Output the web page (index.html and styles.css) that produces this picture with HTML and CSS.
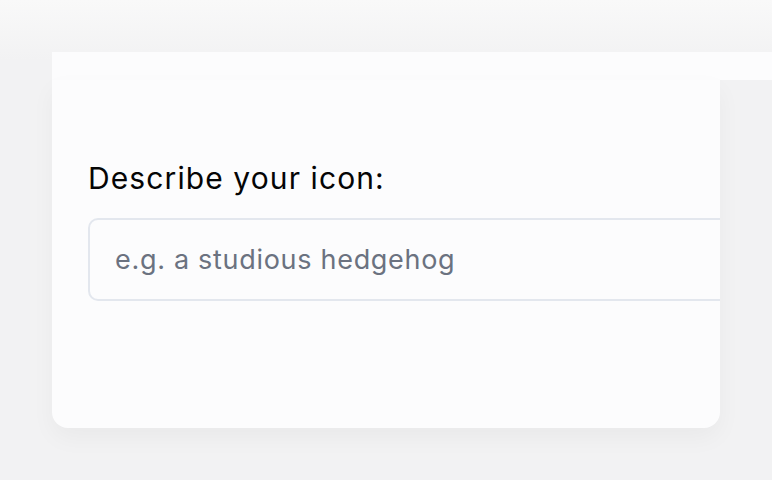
FILE: index.html
```html
<!DOCTYPE html>
<html lang="en">
<head>
  <meta charset="UTF-8" />
  <title>Describe your icon</title>
  <link rel="stylesheet" href="styles.css">
</head>
<body>
  <div class="sheet">
    <div class="sheet-top"></div>
    <div class="card">
      <form class="icon-form">
        <label for="prompt">Describe your icon:</label>
        <input type="text" id="prompt" placeholder="e.g. a studious hedgehog" />
      </form>
    </div>
  </div>
</body>
</html>
```

FILE: styles.css
```css
* {
  box-sizing: border-box;
}

body {
  margin: 0;
  font-family: 'Inter', sans-serif;
  background: linear-gradient(180deg, #f9f9f9, #f2f2f3 60px, #f2f2f3);
  height: 100vh;
  overflow: hidden;
}

.sheet {
  padding: 52px 0 0 52px;
}

.sheet-top {
  height: 28px;
  background-color: #fcfcfd;
}

.card {
  width: 668px;
  height: 348px;
  background-color: #fcfcfd;
  border-radius: 0 0 16px 16px;
  box-shadow: 0 10px 24px rgba(0, 0, 0, 0.04);
  overflow: hidden;
  padding: 81px 0 0 36px;
}

.icon-form {
  display: flex;
  flex-direction: column;
  gap: 23px;
  width: 720px;
}

label {
  font-size: 30px;
  color: #050505;
  line-height: 34px;
  letter-spacing: 1.1px;
}

input {
  width: 100%;
  height: 83px;
  padding: 0 25px;
  border: 2px solid #e3e7ee;
  border-radius: 10px;
  background-color: #fcfcfd;
  font-family: 'Inter', sans-serif;
  font-size: 27px;
  letter-spacing: 0.7px;
  outline: none;
}

input::placeholder {
  color: #6b7280;
}
```
